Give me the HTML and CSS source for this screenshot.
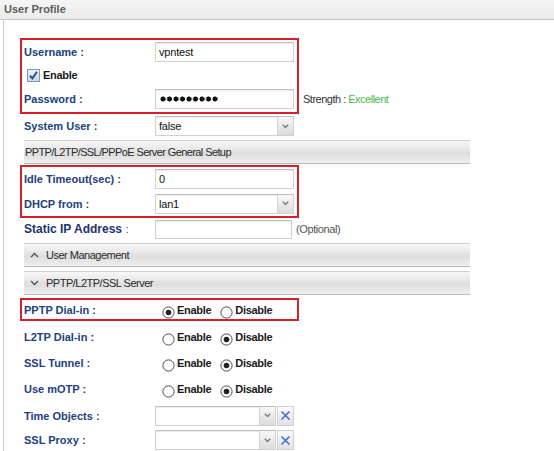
FILE: index.html
```html
<!DOCTYPE html>
<html>
<head>
<meta charset="utf-8">
<link rel="stylesheet" href="styles.css">
</head>
<body>
<div class="header">User Profile</div>
<div class="panel">
  <div class="grp red">
    <div class="row h24"><span class="lbl">Username :</span><div class="inp">vpntest</div></div>
    <div class="row h22 chkrow">
      <svg class="chk" width="13" height="13" viewBox="0 0 13 13"><defs><linearGradient id="cg" x1="0" y1="0" x2="0" y2="1"><stop offset="0" stop-color="#eef3fa"/><stop offset="1" stop-color="#c9d6e8"/></linearGradient></defs><rect x="0.5" y="0.5" width="12" height="12" fill="url(#cg)" stroke="#8596b2"/><path d="M3 6.6 L5.4 9.4 L10 2.8" fill="none" stroke="#2d4d9c" stroke-width="2"/></svg>
      <span class="opt">Enable</span>
    </div>
    <div class="row h26"><span class="lbl">Password :</span><div class="inp pwbox"><span class="dots"></span></div><span class="strength">Strength : <span class="exc">Excellent</span></span></div>
  </div>
  <div class="grp">
    <div class="row h24"><span class="lbl">System User :</span><div class="sel"><span class="val">false</span><span class="dd"><svg width="7" height="5" viewBox="0 0 7 5"><path d="M0.8 0.8 L3.5 3.6 L6.2 0.8" fill="none" stroke="#7a7a7a" stroke-width="1.4"/></svg></span></div></div>
  </div>
  <div class="bar b1">PPTP/L2TP/SSL/PPPoE Server General Setup</div>
  <div class="grp red g2">
    <div class="row h24"><span class="lbl">Idle Timeout(sec) :</span><div class="inp">0</div></div>
    <div class="row h25"><span class="lbl">DHCP from :</span><div class="sel"><span class="val">lan1</span><span class="dd"><svg width="7" height="5" viewBox="0 0 7 5"><path d="M0.8 0.8 L3.5 3.6 L6.2 0.8" fill="none" stroke="#7a7a7a" stroke-width="1.4"/></svg></span></div></div>
  </div>
  <div class="grp">
    <div class="row h22"><span class="lbl big">Static IP Address <span class="colon">:</span></span><div class="inp sip"></div><span class="note">(Optional)</span></div>
  </div>
  <div class="bar b2"><svg class="chev" width="9" height="6" viewBox="0 0 9 6"><path d="M1 5 L4.5 1.5 L8 5" fill="none" stroke="#555" stroke-width="1.4"/></svg>User Management</div>
  <div class="bar b3"><svg class="chev" width="9" height="6" viewBox="0 0 9 6"><path d="M1 1 L4.5 4.5 L8 1" fill="none" stroke="#555" stroke-width="1.4"/></svg>PPTP/L2TP/SSL Server</div>
  <div class="grp red g3">
    <div class="row h19"><span class="lbl">PPTP Dial-in :</span>
      <div class="radios">
        <svg class="rad" width="13" height="13" viewBox="0 0 13 13"><circle cx="6.5" cy="6.5" r="5.6" fill="#fff" stroke="#4a4a4a"/><circle cx="6.5" cy="6.5" r="2.8" fill="#222"/></svg><span class="opt">Enable</span>
        <svg class="rad r2" width="13" height="13" viewBox="0 0 13 13"><circle cx="6.5" cy="6.5" r="5.6" fill="#fff" stroke="#4a4a4a"/></svg><span class="opt">Disable</span>
      </div>
    </div>
  </div>
  <div class="grp g4">
    <div class="row h26"><span class="lbl">L2TP Dial-in :</span>
      <div class="radios">
        <svg class="rad" width="13" height="13" viewBox="0 0 13 13"><circle cx="6.5" cy="6.5" r="5.6" fill="#fff" stroke="#4a4a4a"/></svg><span class="opt">Enable</span>
        <svg class="rad r2" width="13" height="13" viewBox="0 0 13 13"><circle cx="6.5" cy="6.5" r="5.6" fill="#fff" stroke="#4a4a4a"/><circle cx="6.5" cy="6.5" r="2.8" fill="#222"/></svg><span class="opt">Disable</span>
      </div>
    </div>
    <div class="row h26"><span class="lbl">SSL Tunnel :</span>
      <div class="radios">
        <svg class="rad" width="13" height="13" viewBox="0 0 13 13"><circle cx="6.5" cy="6.5" r="5.6" fill="#fff" stroke="#4a4a4a"/></svg><span class="opt">Enable</span>
        <svg class="rad r2" width="13" height="13" viewBox="0 0 13 13"><circle cx="6.5" cy="6.5" r="5.6" fill="#fff" stroke="#4a4a4a"/><circle cx="6.5" cy="6.5" r="2.8" fill="#222"/></svg><span class="opt">Disable</span>
      </div>
    </div>
    <div class="row h26"><span class="lbl">Use mOTP :</span>
      <div class="radios">
        <svg class="rad" width="13" height="13" viewBox="0 0 13 13"><circle cx="6.5" cy="6.5" r="5.6" fill="#fff" stroke="#4a4a4a"/></svg><span class="opt">Enable</span>
        <svg class="rad r2" width="13" height="13" viewBox="0 0 13 13"><circle cx="6.5" cy="6.5" r="5.6" fill="#fff" stroke="#4a4a4a"/><circle cx="6.5" cy="6.5" r="2.8" fill="#222"/></svg><span class="opt">Disable</span>
      </div>
    </div>
    <div class="row h27"><span class="lbl">Time Objects :</span>
      <div class="sel short"><span class="val"></span><span class="dd"><svg width="7" height="5" viewBox="0 0 7 5"><path d="M0.8 0.8 L3.5 3.6 L6.2 0.8" fill="none" stroke="#7a7a7a" stroke-width="1.4"/></svg></span></div>
      <span class="xb"><svg width="11" height="11" viewBox="0 0 11 11"><path d="M1.5 1.5 L9.5 9.5 M9.5 1.5 L1.5 9.5" stroke="#3f6fd6" stroke-width="1.6"/></svg></span>
    </div>
    <div class="row h22"><span class="lbl">SSL Proxy :</span>
      <div class="sel short"><span class="val"></span><span class="dd"><svg width="7" height="5" viewBox="0 0 7 5"><path d="M0.8 0.8 L3.5 3.6 L6.2 0.8" fill="none" stroke="#7a7a7a" stroke-width="1.4"/></svg></span></div>
      <span class="xb"><svg width="11" height="11" viewBox="0 0 11 11"><path d="M1.5 1.5 L9.5 9.5 M9.5 1.5 L1.5 9.5" stroke="#3f6fd6" stroke-width="1.6"/></svg></span>
    </div>
  </div>
</div>
</body>
</html>
```

FILE: styles.css
```css
html, body {
  margin: 0;
  padding: 0;
  background: #fff;
  font-family: "Liberation Sans", Arial, sans-serif;
  font-size: 11px;
  color: #222;
  overflow: hidden;
}

.header {
  height: 20px;
  box-sizing: border-box;
  line-height: 19px;
  padding-left: 4px;
  font-weight: bold;
  color: #5c5c5c;
  background: linear-gradient(#f6f6f6, #ebebeb);
  border-bottom: 1px solid #c6c6c6;
}

.panel {
  margin-left: 3px;
  border-left: 1px solid #cfcfcf;
  padding: 18px 0 0 16px;
  height: 440px;
  box-sizing: border-box;
}

.grp {
  width: 279px;
  box-sizing: border-box;
  border-left: 2px solid transparent;
  border-right: 2px solid transparent;
}

.grp.red {
  border: 2px solid #d8202c;
}

.row {
  display: flex;
  align-items: center;
  white-space: nowrap;
}

.h19 { height: 19px; }
.h22 { height: 22px; }
.h24 { height: 24px; }
.h25 { height: 25px; }
.h26 { height: 26px; }
.h27 { height: 27px; }

.lbl {
  flex: 0 0 auto;
  width: 131px;
  padding-left: 2px;
  font-weight: bold;
  color: #21407e;
}

.lbl.big {
  font-size: 12px;
  color: #1b3470;
}

.lbl .colon {
  font-weight: normal;
  font-size: 11px;
  color: #3a5690;
}

.inp, .sel {
  flex: 0 0 auto;
  width: 139px;
  height: 20px;
  box-sizing: border-box;
  border: 1px solid #d0d0d0;
  border-top-color: #bdbdbd;
  background: #fff;
  box-shadow: inset 0 1px 1px #ececec;
  display: flex;
  align-items: center;
  padding-left: 3px;
  color: #111;
  letter-spacing: -0.2px;
}

.inp.sip {
  width: 137px;
  height: 19px;
}

.pwbox {
  padding-left: 4px;
}

.dots {
  display: block;
  width: 58px;
  height: 6px;
  background: radial-gradient(circle at 3px 3px, #111 2.3px, transparent 2.8px) 0 0 / 6.5px 6px repeat-x;
}

.sel {
  padding-right: 0;
}

.sel .val {
  flex: 1 1 auto;
}

.sel .dd {
  flex: 0 0 auto;
  width: 16px;
  height: 100%;
  box-sizing: border-box;
  border-left: 1px solid #d3d3d3;
  background: linear-gradient(#f8f8f8, #dcdcdc);
  display: flex;
  align-items: center;
  justify-content: center;
}

.sel.short {
  width: 121px;
}

.xb {
  flex: 0 0 auto;
  width: 17px;
  height: 20px;
  margin-left: 1px;
  box-sizing: border-box;
  border: 1px solid #d0d0d0;
  background: linear-gradient(#fafafa, #e2e2e2);
  display: flex;
  align-items: center;
  justify-content: center;
}

.strength {
  flex: 0 0 auto;
  margin-left: 9px;
  color: #333;
  letter-spacing: -0.5px;
}

.exc {
  color: #4cbb4c;
}

.note {
  flex: 0 0 auto;
  margin-left: 4px;
  color: #555;
  letter-spacing: -0.4px;
}

.chkrow {
  padding-left: 5px;
}

.chk {
  flex: 0 0 auto;
  margin-right: 3px;
}

.opt {
  font-weight: bold;
  color: #1a1a1a;
  letter-spacing: -0.3px;
}

.radios {
  display: flex;
  align-items: center;
  margin-left: 7px;
}

.rad {
  flex: 0 0 auto;
  margin-top: 5px;
  margin-right: 2px;
}

.rad.r2 {
  margin-left: 9px;
}

.bar {
  width: 446px;
  height: 24px;
  margin-left: 4px;
  box-sizing: border-box;
  border-top: 1px solid #cecece;
  border-bottom: 1px solid #b9b9b9;
  background: linear-gradient(#f7f7f7 0%, #e9e9e9 35%, #dedede 55%, #e6e6e6 80%, #efefef 100%);
  display: flex;
  align-items: center;
  padding-left: 1px;
  color: #2a2a2a;
  letter-spacing: -0.6px;
  white-space: nowrap;
}

.b1 { margin-top: 2px; margin-bottom: 1px; }
.b2 { margin-top: 3px; padding-left: 6px; letter-spacing: -0.5px; }
.b3 { margin-top: 4px; margin-bottom: 3px; padding-left: 6px; letter-spacing: -0.5px; }

.chev {
  flex: 0 0 auto;
  margin-right: 7px;
}

.g4 {
  margin-top: 3px;
}
```
